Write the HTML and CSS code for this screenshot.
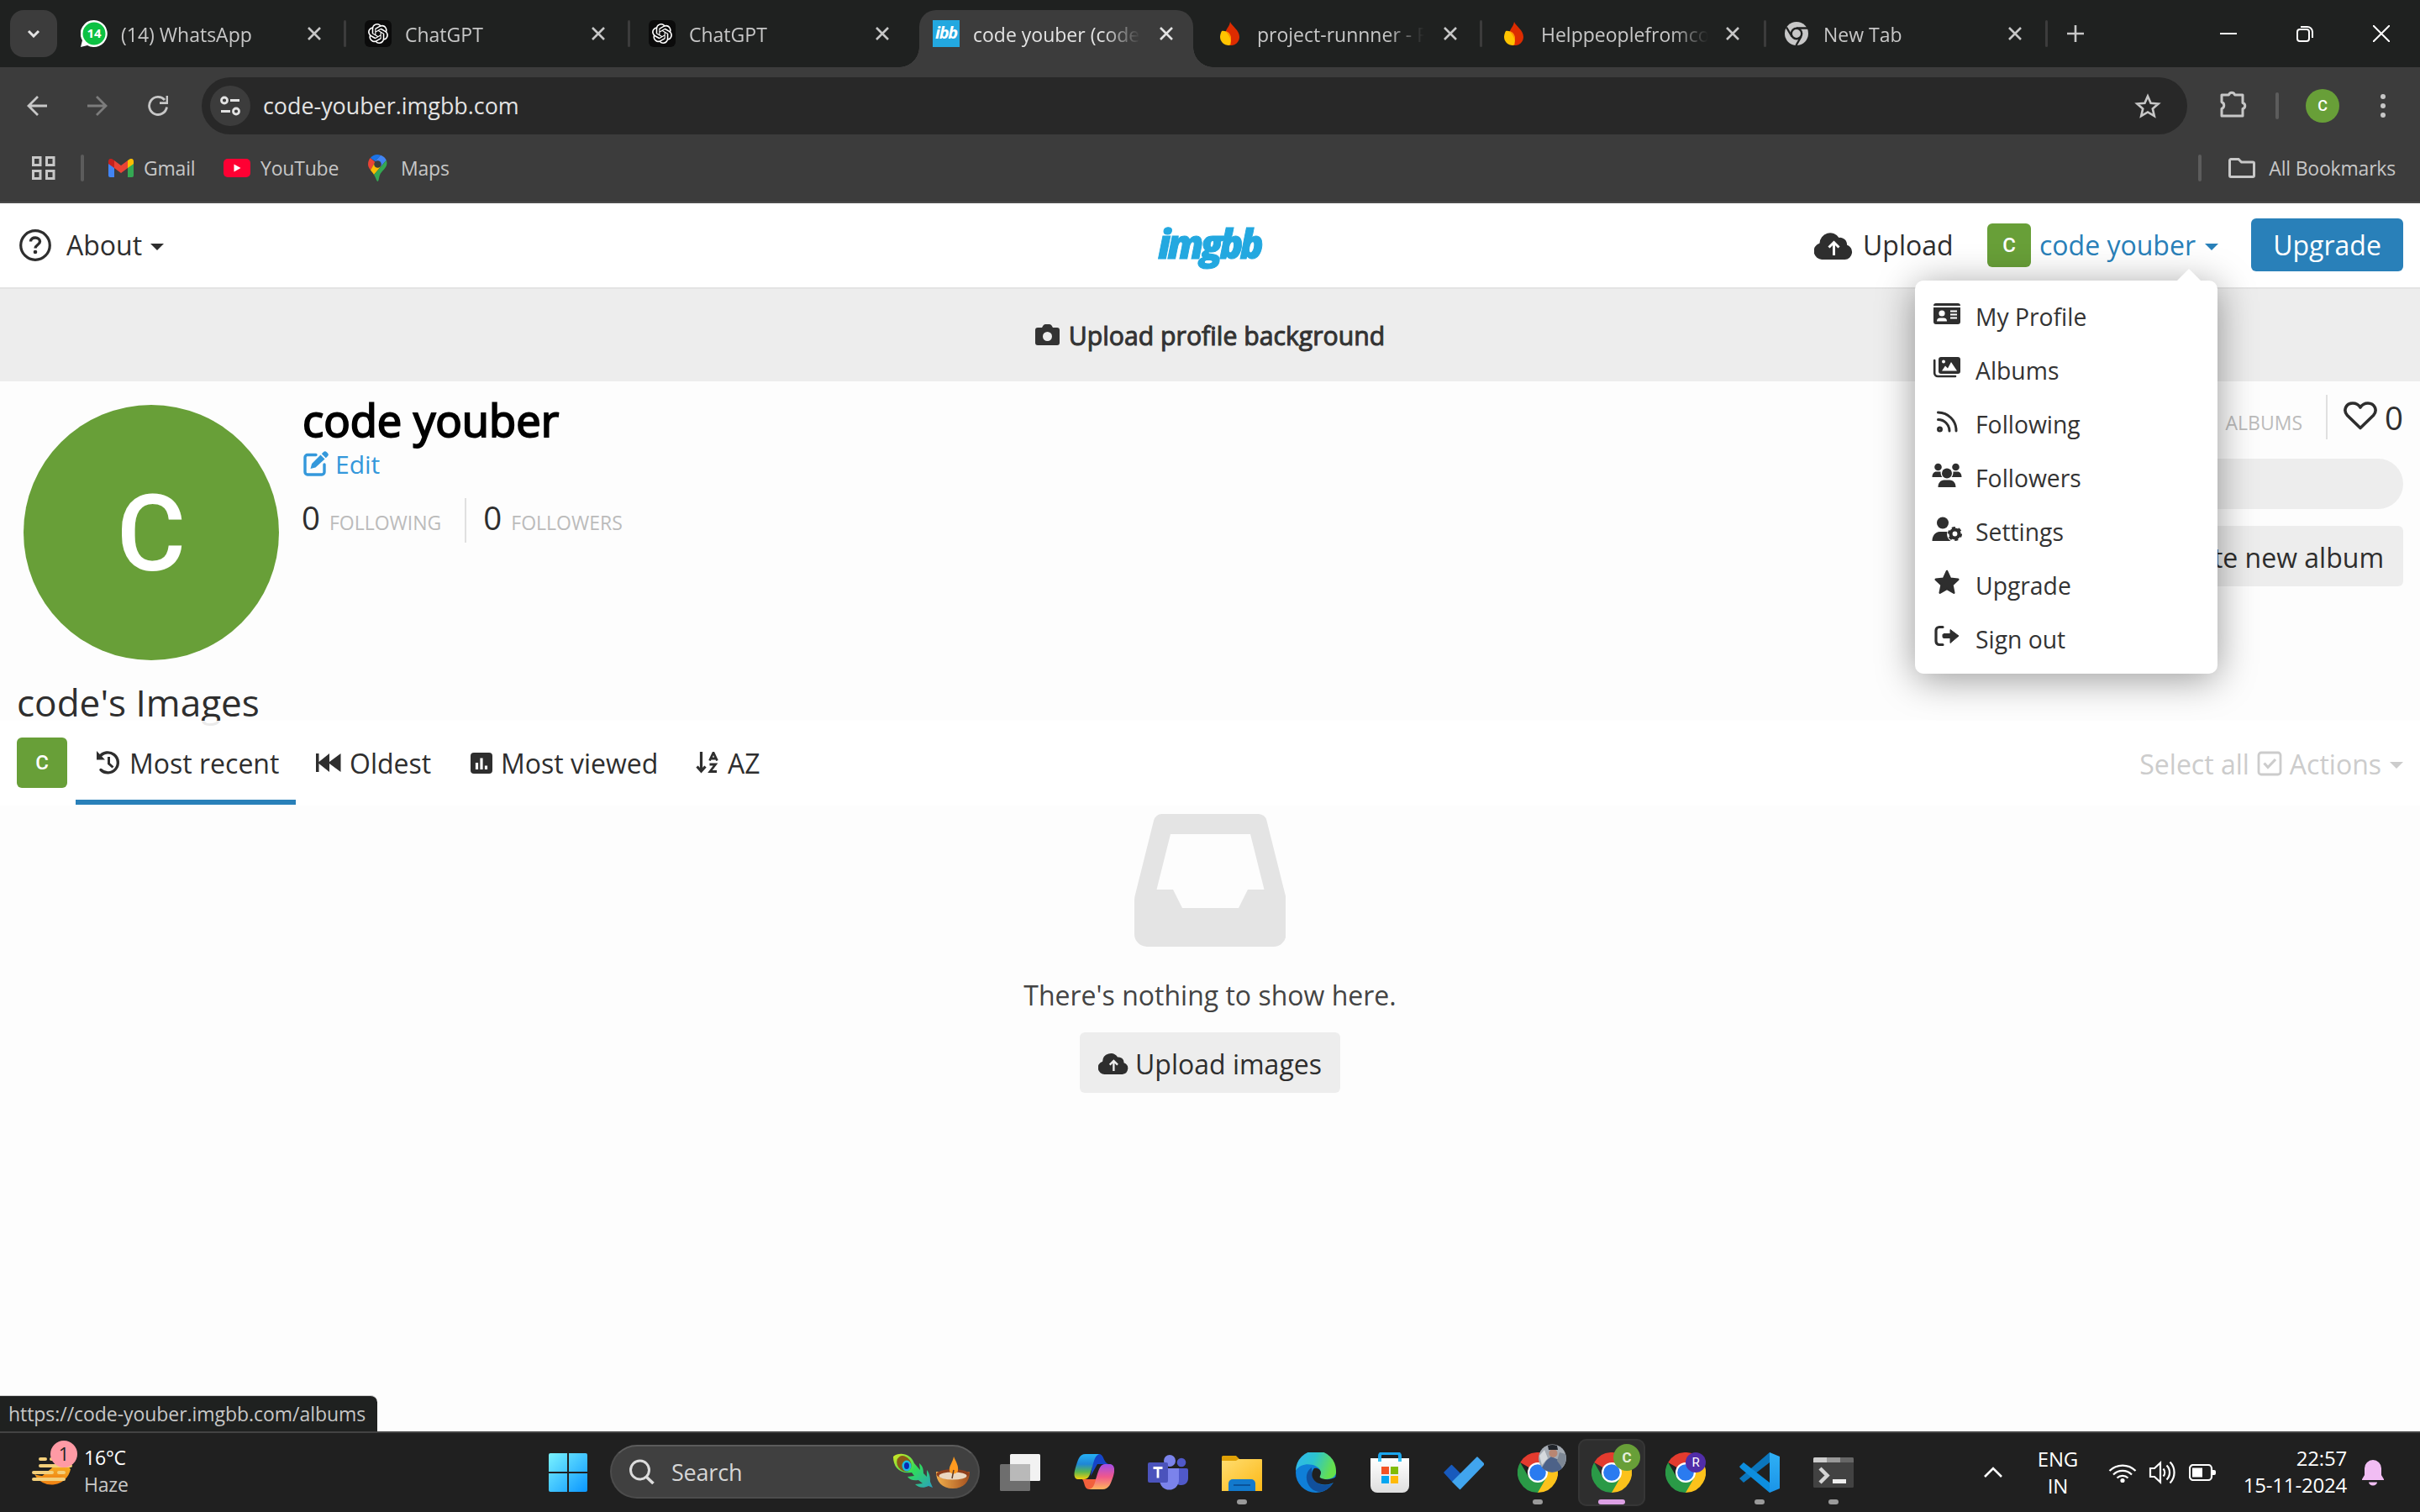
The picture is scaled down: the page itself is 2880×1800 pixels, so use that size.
FILE: index.html
```html
<!DOCTYPE html>
<html lang="en">
<head>
<meta charset="utf-8">
<title>code youber (code-youber) — ImgBB</title>
<link rel="stylesheet" href="styles.css">
</head>
<body>
<svg class="defs" width="0" height="0">
  <defs>
    <linearGradient id="gwin" gradientUnits="userSpaceOnUse" x1="0" y1="0" x2="46" y2="46"><stop offset="0" stop-color="#7af3ff"/><stop offset="1" stop-color="#0a96ff"/></linearGradient>
    <linearGradient id="gsun" x1="0" y1="0" x2="0" y2="1"><stop offset="0" stop-color="#f6c02c"/><stop offset="1" stop-color="#f08012"/></linearGradient>
    <linearGradient id="gcop1" x1="0" y1="0" x2="0" y2="1"><stop offset="0" stop-color="#25b1f5"/><stop offset=".4" stop-color="#1f86d6"/><stop offset=".7" stop-color="#58b552"/><stop offset="1" stop-color="#f4d00c"/></linearGradient>
    <linearGradient id="gcop2" x1="0" y1="0" x2="0" y2="1"><stop offset="0" stop-color="#a24de8"/><stop offset=".5" stop-color="#f0588c"/><stop offset="1" stop-color="#ffb45c"/></linearGradient>
    <linearGradient id="gfold" x1="0" y1="0" x2="1" y2="1"><stop offset="0" stop-color="#ffdd70"/><stop offset="1" stop-color="#fcb917"/></linearGradient>
    <linearGradient id="gedge" x1="0" y1="0" x2="1" y2=".3"><stop offset="0" stop-color="#2fb4f2"/><stop offset=".5" stop-color="#2cc4cf"/><stop offset="1" stop-color="#66e04c"/></linearGradient>
    <linearGradient id="gstore" x1="0" y1="0" x2="0" y2="1"><stop offset="0" stop-color="#fff"/><stop offset="1" stop-color="#dedede"/></linearGradient>
    <linearGradient id="gfeather" x1="0" y1="0" x2="1" y2="1"><stop offset="0" stop-color="#d7e620"/><stop offset=".5" stop-color="#2fdc5a"/><stop offset="1" stop-color="#2b9fc0"/></linearGradient>
    <linearGradient id="gbowl" x1="0" y1="0" x2="1" y2="0"><stop offset="0" stop-color="#f2b04c"/><stop offset="1" stop-color="#a4501f"/></linearGradient>
    <linearGradient id="gcode" x1="0" y1="0" x2="0" y2="1"><stop offset="0" stop-color="#2fb0f5"/><stop offset="1" stop-color="#1a94e8"/></linearGradient>
    <symbol id="x" viewBox="0 0 16 16"><path d="M1 1l14 14M15 1L1 15" fill="none" stroke="currentColor" stroke-width="2.6"/></symbol>
    <symbol id="gpt" viewBox="0 0 32 32"><rect width="32" height="32" rx="6" fill="#0b0b0b"/><path transform="translate(4 4)" fill="#fff" d="M22.2819 9.8211a5.9847 5.9847 0 0 0-.5157-4.9108 6.0462 6.0462 0 0 0-6.5098-2.9A6.0651 6.0651 0 0 0 4.9807 4.1818a5.9847 5.9847 0 0 0-3.9977 2.9 6.0462 6.0462 0 0 0 .7427 7.0966 5.98 5.98 0 0 0 .511 4.9107 6.051 6.051 0 0 0 6.5146 2.9001A5.9847 5.9847 0 0 0 13.2599 24a6.0557 6.0557 0 0 0 5.7718-4.2058 5.9894 5.9894 0 0 0 3.9977-2.9001 6.0557 6.0557 0 0 0-.7475-7.0729zm-9.022 12.6081a4.4755 4.4755 0 0 1-2.8764-1.0408l.1419-.0804 4.7783-2.7582a.7948.7948 0 0 0 .3927-.6813v-6.7369l2.02 1.1686a.071.071 0 0 1 .038.052v5.5826a4.504 4.504 0 0 1-4.4945 4.4944zm-9.6607-4.1254a4.4708 4.4708 0 0 1-.5346-3.0137l.142.0852 4.783 2.7582a.7712.7712 0 0 0 .7806 0l5.8428-3.3685v2.3324a.0804.0804 0 0 1-.0332.0615L9.74 19.9502a4.4992 4.4992 0 0 1-6.1408-1.6464zM2.3408 7.8956a4.485 4.485 0 0 1 2.3655-1.9728V11.6a.7664.7664 0 0 0 .3879.6765l5.8144 3.3543-2.0201 1.1685a.0757.0757 0 0 1-.071 0l-4.8303-2.7865A4.504 4.504 0 0 1 2.3408 7.872zm16.5963 3.8558L13.1038 8.364 15.1192 7.2a.0757.0757 0 0 1 .071 0l4.8303 2.7913a4.4944 4.4944 0 0 1-.6765 8.1042v-5.6772a.79.79 0 0 0-.407-.667zm2.0107-3.0231l-.142-.0852-4.7735-2.7818a.7759.7759 0 0 0-.7854 0L9.409 9.2297V6.8974a.0662.0662 0 0 1 .0284-.0615l4.8303-2.7866a4.4992 4.4992 0 0 1 6.6802 4.66zM8.3065 12.863l-2.02-1.1638a.0804.0804 0 0 1-.038-.0567V6.0742a4.4992 4.4992 0 0 1 7.3757-3.4537l-.142.0805L8.704 5.459a.7948.7948 0 0 0-.3927.6813zm1.0976-2.3654l2.602-1.4998 2.6069 1.4998v2.9994l-2.5974 1.4997-2.6067-1.4997Z"/></symbol>
    <symbol id="flame" viewBox="0 0 24 28"><path d="M12 0c2 5 11 10 11 18a10 10 0 0 1-11 10C5 28 5 20 6 14 7 8 11 6 12 0z" fill="#dd2c00"/><path d="M2 11c5-1 11 3 11 10 0 4-1 6-2 7C4 28 0 23 0 18c0-3 1-5 2-7z" fill="#ffc400"/><path d="M6 11c5 1 7 4 7 10 0 4-1 6-2 7 4 0 2-11-5-17z" fill="#ff9100"/></symbol>
    <symbol id="cloud" viewBox="0 0 46 33"><path d="M10 33A10 10 0 0 1 6.500 13.500 12.500 12.500 0 0 1 29.500 7 8 8 0 0 1 39 15.500 9 9 0 0 1 36.500 33z" fill="currentColor"/><path d="M23.500 28V13M17.500 18.500l6-6 6 6" fill="none" stroke="var(--hole,#fff)" stroke-width="3"/></symbol>
    <symbol id="caret" viewBox="0 0 16 8"><path d="M0 0h16l-8 8z" fill="currentColor"/></symbol>
    <symbol id="chrome" viewBox="0 0 48 48"><path d="M24 24L3.200 12A24 24 0 0 1 44.800 12z" fill="#e33b2e"/><path d="M24 24V12h20.800A24 24 0 0 1 24 48z" fill="#fcc21b"/><path d="M3.200 12L13.600 30 24 36l10.400-6L24 48A24 24 0 0 1 3.200 12z" fill="#2a9a47"/><circle cx="24" cy="24" r="12" fill="#fff"/><circle cx="24" cy="24" r="9.800" fill="#2a7bf0"/></symbol>
  </defs>
</svg>

<header class="browser">
  <div class="tabstrip">
    <div class="tabsearch"><svg width="16" height="10" viewBox="0 0 16 10"><path d="M2 2l6 6 6-6" fill="none" stroke="#e3e3e3" stroke-width="3"/></svg></div>
    <div class="tab tab-wa"><svg class="fav" viewBox="0 0 32 32"><path d="M16 0a16 16 0 1 1-8 30L0 32l2-8A16 16 0 0 1 16 0z" fill="#fff"/><circle cx="16" cy="16" r="13.500" fill="#0dc143"/><text x="16" y="21" class="wa-num">14</text></svg><span class="title">(14) WhatsApp</span><svg class="close"><use href="#x"/></svg></div>
    <i class="sep"></i>
    <div class="tab"><svg class="fav"><use href="#gpt"/></svg><span class="title">ChatGPT</span><svg class="close"><use href="#x"/></svg></div>
    <i class="sep"></i>
    <div class="tab"><svg class="fav"><use href="#gpt"/></svg><span class="title">ChatGPT</span><svg class="close"><use href="#x"/></svg></div>
    <i class="sep none"></i>
    <div class="tab active"><span class="fav ibb">ibb</span><span class="title">code youber (code-</span><svg class="close"><use href="#x"/></svg></div>
    <i class="sep none"></i>
    <div class="tab"><svg class="fav flame"><use href="#flame"/></svg><span class="title">project-runnner - F</span><svg class="close"><use href="#x"/></svg></div>
    <i class="sep"></i>
    <div class="tab late"><svg class="fav flame"><use href="#flame"/></svg><span class="title">Helppeoplefromco</span><svg class="close"><use href="#x"/></svg></div>
    <i class="sep"></i>
    <div class="tab last"><svg class="fav" viewBox="0 -2 32 32"><circle cx="14" cy="14" r="14" fill="#c7c7c7"/><circle cx="14" cy="14" r="6.200" fill="#c7c7c7" stroke="#1f2120" stroke-width="2.400"/><path d="M14 7.500h13M8.500 17.500L2 6.500M19.500 17.500L13.500 28" stroke="#1f2120" stroke-width="2.400"/></svg><span class="title">New Tab</span><svg class="close"><use href="#x"/></svg></div>
    <i class="sep"></i>
    <svg class="plus" viewBox="0 0 20 20"><path d="M10 0v20M0 10h20" stroke="#c7c7c7" stroke-width="2.600"/></svg>
    <div class="winctl">
      <svg width="20" height="20"><path d="M0 10h20" stroke="#fff" stroke-width="2"/></svg>
      <svg width="20" height="20" fill="none" stroke="#fff" stroke-width="2"><rect x="1" y="5" width="14" height="14" rx="3"/><path d="M5 2h8a6 6 0 0 1 6 6v7"/></svg>
      <svg width="20" height="20"><path d="M0 0l20 20M20 0L0 20" stroke="#fff" stroke-width="2"/></svg>
    </div>
  </div>
  <div class="toolbar">
    <svg class="back" viewBox="0 0 24 24"><path d="M24 12H2M13 1L2 12l11 11" fill="none" stroke="#c7c7c7" stroke-width="2.800"/></svg>
    <svg class="fwd" viewBox="0 0 24 24"><path d="M0 12h22M11 1l11 11-11 11" fill="none" stroke="#7c7c7c" stroke-width="2.800"/></svg>
    <svg class="reload" viewBox="0 0 24 24"><path d="M22.500 13.500A10.500 10.500 0 1 1 20 5M23 0v8.600h-9" fill="none" stroke="#c7c7c7" stroke-width="2.800"/></svg>
    <div class="omnibox">
      <div class="tune"><svg width="24" height="24" fill="none" stroke="#e3e3e3" stroke-width="2.800"><circle cx="5" cy="5.500" r="3.500"/><path d="M12 5.500h11M1 18.500h11"/><circle cx="19" cy="18.500" r="3.500"/></svg></div>
      <span class="url">code-youber.imgbb.com</span>
      <svg class="star" viewBox="0 0 32 30"><path d="M16 3.500l3.600 8.200 9 .8-6.800 5.900 2 8.700L16 22.500l-7.800 4.600 2-8.700-6.800-5.900 9-.8z" fill="none" stroke="#c7c7c7" stroke-width="2.600"/></svg>
    </div>
    <svg class="puzzle" viewBox="0 0 34 34"><path d="M3 6h8.500a3.600 3.600 0 0 1 7 0H28v9.500a3.600 3.600 0 0 1 0 7V31H3v-8.500a4.300 4.300 0 0 0 0-8z" fill="none" stroke="#c7c7c7" stroke-width="3" stroke-linejoin="round"/></svg>
    <i class="bar"></i>
    <span class="me">C</span>
    <svg class="dots" viewBox="0 0 6 28" fill="#c7c7c7"><circle cx="3" cy="3" r="3"/><circle cx="3" cy="14" r="3"/><circle cx="3" cy="25" r="3"/></svg>
  </div>
  <div class="bookmarks">
    <svg class="apps" width="28" height="28" fill="none" stroke="#c7c7c7" stroke-width="3"><path d="M1.500 1.500h8.500v9h-8.500zM17.500 1.500h8.500v9h-8.500zM1.500 17.500h8.500v9h-8.500zM17.500 17.500h8.500v9h-8.500z"/></svg>
    <i class="bar"></i>
    <svg class="bm-gmail" width="30" height="22" viewBox="0 0 30 22"><path d="M0 3h7v19H2a2 2 0 0 1-2-2z" fill="#4285f4"/><path d="M23 3h7v17a2 2 0 0 1-2 2h-5z" fill="#34a853"/><path d="M7 2l8 6 8-6v9l-8 6-8-6z" fill="#ea4335"/><path d="M0 3c0-3 3-4 5.500-2L7 2v9L0 6z" fill="#c5221f"/><path d="M30 3c0-3-3-4-5.500-2L23 2v9l7-5z" fill="#fbbc04"/></svg>
    <span class="w-gmail">Gmail</span>
    <svg width="32" height="22"><rect width="32" height="22" rx="5" fill="#ff0033"/><path d="M12.500 6.500v9l8-4.500z" fill="#fff"/></svg>
    <span class="w-yt">YouTube</span>
    <svg width="23" height="32" viewBox="0 0 23 32"><path d="M2.800 4L8.500 9 3 18.500C1 16 0 14 0 11.500 0 8.500 1 6 2.800 4z" fill="#ea4335"/><path d="M2.800 4A11.500 11.500 0 0 1 15 .7L8.500 8z" fill="#1a73e8"/><path d="M15 .7c3 1 5.500 3 6.800 6L15 14.500 8.500 8z" fill="#4285f4"/><path d="M3 18.500L8 9.500l7 5-8 9.500c-1-2-2.600-3.500-4-5.500z" fill="#fbbc04"/><path d="M21.800 6.700c3 9-5.300 11.300-8 18.300-1 3-1 7-2.300 7S9.600 28 7 24z" fill="#34a853"/><circle cx="11.500" cy="11.500" r="4.300" fill="#3c3c3c"/></svg>
    <span class="w-maps">Maps</span>
    <i class="bar push"></i>
    <svg class="folder" width="32" height="24" viewBox="0 0 32 24"><path d="M1.500 3a1.500 1.500 0 0 1 1.500-1.500h9l3.500 3.500H29a1.500 1.500 0 0 1 1.500 1.500V21a1.500 1.500 0 0 1-1.500 1.500H3A1.500 1.500 0 0 1 1.500 21z" fill="none" stroke="#c7c7c7" stroke-width="3"/></svg>
    <span class="w-all">All Bookmarks</span>
  </div>
</header>

<main class="site">
  <nav class="topbar">
    <svg class="q" viewBox="0 0 38 38"><circle cx="19" cy="19" r="17.300" fill="none" stroke="#2e2e2e" stroke-width="3.200"/><path d="M13.500 14.500c0-3 2.500-4.500 5.500-4.500s5.500 1.800 5.500 4.500c0 4-5.500 4-5.500 8" fill="none" stroke="#2e2e2e" stroke-width="3.400"/><circle cx="19" cy="27" r="2.300" fill="#2e2e2e"/></svg>
    <span class="about">About</span><svg class="caret"><use href="#caret"/></svg>
    <span class="logo">imgbb</span>
    <svg class="upcloud"><use href="#cloud"/></svg><span class="upload">Upload</span>
    <span class="avatar hdr-av">C</span>
    <span class="user">code youber</span><svg class="caret blue"><use href="#caret"/></svg>
    <a class="upgrade">Upgrade</a>
    <ul class="menu">
      <li><svg width="36" height="36" viewBox="0 0 36 36"><path d="M2 8a3 3 0 0 1 3-3h26a3 3 0 0 1 3 3zM2 10h32v17a3 3 0 0 1-3 3H5a3 3 0 0 1-3-3z" fill="#2e2e2e"/><g fill="#fff"><circle cx="12" cy="17" r="3.600"/><path d="M6 26.500a4 4 0 0 1 4-4h4a4 4 0 0 1 4 4zM22 13.500h8v2h-8zM22 17.500h8v2h-8zM22 21.500h8v2h-8z"/></g></svg>My Profile</li>
      <li><svg width="36" height="36" viewBox="0 0 36 36"><rect x="8" y="5" width="26" height="20" rx="3" fill="#2e2e2e"/><path d="M3.200 9v15a4 4 0 0 0 4 4H28" fill="none" stroke="#2e2e2e" stroke-width="2.600" stroke-linecap="round"/><circle cx="14" cy="10.500" r="2" fill="#fff"/><path d="M12 21.500l4-6 3 3 4-7.500 7 10.500z" fill="#fff"/></svg>Albums</li>
      <li><svg width="36" height="36" viewBox="0 0 36 36" fill="none" stroke="#2e2e2e" stroke-width="3" stroke-linecap="round"><circle cx="9.500" cy="27" r="2" /><path d="M7.500 15.500A13.500 13.500 0 0 1 21 29M7.500 7A21.500 21.500 0 0 1 29 29"/></svg>Following</li>
      <li><svg width="36" height="36" viewBox="0 0 36 36" fill="#2e2e2e"><circle cx="7.500" cy="8" r="4.300"/><circle cx="28.500" cy="8" r="4.300"/><circle cx="18" cy="15.500" r="6"/><path d="M.500 20c0-4 2-6.500 5-6.500h5c0 3 .5 5 2 6.500zM35.500 20c0-4-2-6.500-5-6.500h-5c0 3-.5 5-2 6.500zM7.500 32c0-5 3-8.500 7-8.500h7c4 0 7 3.500 7 8.500z"/></svg>Followers</li>
      <li><svg width="36" height="36" viewBox="0 0 36 36" fill="#2e2e2e"><circle cx="13" cy="10.500" r="7"/><path d="M.500 32c0-6 3.500-11 9-11h9c-1 4 0 8 4 11z"/><circle cx="27.500" cy="23.500" r="5" fill="none" stroke="#2e2e2e" stroke-width="4.200"/><circle cx="27.500" cy="23.500" r="7.300" fill="none" stroke="#2e2e2e" stroke-width="2.600" stroke-dasharray="4 3.640"/></svg>Settings</li>
      <li><svg width="36" height="36" viewBox="0 0 36 36" fill="#2e2e2e"><path d="M18 4l4 8.700 9.300 1.100-6.900 6.500 1.900 9.400L18 25l-8.300 4.700 1.900-9.400-6.900-6.500 9.300-1.100z" stroke="#2e2e2e" stroke-width="2.500" stroke-linejoin="round"/></svg>Upgrade</li>
      <li><svg width="36" height="36" viewBox="0 0 36 36"><path d="M13 6.500H9a4 4 0 0 0-4 4v13a4 4 0 0 0 4 4h4" fill="none" stroke="#2e2e2e" stroke-width="3.200" stroke-linecap="round"/><path d="M14 14.500h8v-5L32 17l-10 8.500v-6h-8a1.500 1.500 0 0 1-1-1.500v-2.500z" fill="#2e2e2e" stroke="#2e2e2e" stroke-linejoin="round"/></svg>Sign out</li>
    </ul>
  </nav>
  <div class="band"><svg width="29" height="25" viewBox="0 0 29 25"><path d="M3 4h5l1.500-2.500A3 3 0 0 1 12 0h5a3 3 0 0 1 2.500 1.500L21 4h5a3 3 0 0 1 3 3v15a3 3 0 0 1-3 3H3a3 3 0 0 1-3-3V7a3 3 0 0 1 3-3z" fill="#333"/><circle cx="14.500" cy="14.500" r="5.500" fill="#ededed"/></svg><span>Upload profile background</span></div>

  <section class="profile">
    <span class="avatar big">C</span>
    <div class="who">
      <h1>code youber</h1>
      <div class="edit"><svg width="30" height="30" viewBox="0 0 30 30"><path d="M15 4.500H5a3 3 0 0 0-3 3V25a3 3 0 0 0 3 3h17a3 3 0 0 0 3-3V16" fill="none" stroke="#3498db" stroke-width="3.400" stroke-linecap="round"/><path d="M8.500 21l1.600-6L20.500 4.500l5 5L14.500 19.500zM21.800 3.200l2-2a2.800 2.800 0 0 1 4 0l1 1a2.800 2.800 0 0 1 0 4l-2 2z" fill="#3498db"/></svg><span>Edit</span></div>
      <div class="stats"><b>0</b><span class="s1">FOLLOWING</span><i></i><b>0</b><span>FOLLOWERS</span></div>
    </div>
    <div class="side">
      <div class="stats right"><b>0</b><span>ALBUMS</span><i></i><svg width="40" height="34" viewBox="0 0 40 34"><path d="M20 31.500L4.500 16.500C-1 10.500 3 2 11 2c4 0 7 2 9 5 2-3 5-5 9-5 8 0 12 8.500 6.500 14.500z" fill="none" stroke="#2e2e2e" stroke-width="3.600" stroke-linejoin="round"/></svg><b class="likes">0</b></div>
      <div class="pill"></div>
      <a class="btn album">Create new album</a>
    </div>
  </section>

  <h2>code's Images</h2>
  <div class="tabsbar">
    <span class="avatar small">C</span>
    <div class="ft on"><svg width="30" height="30" viewBox="0 0 30 30"><path d="M4.500 8A12 12 0 1 1 6 23.500" fill="none" stroke="#2e2e2e" stroke-width="3.400" stroke-linecap="round"/><path d="M1 1v10.500h10z" fill="#2e2e2e"/><path d="M15.500 8v8l5 4.500" fill="none" stroke="#2e2e2e" stroke-width="3"/></svg>Most recent</div>
    <div class="ft f2"><svg width="30" height="22" viewBox="0 0 30 22"><path d="M0 0h3.500v10L16 0v10L29.500 0v22L16 12v10L3.500 12v10H0z" fill="#2e2e2e"/></svg>Oldest</div>
    <div class="ft f3"><svg width="26" height="25" viewBox="0 0 26 25"><rect width="26" height="25" rx="4" fill="#2e2e2e"/><path d="M7.500 12v8M13 6.500V20M18.500 15.500V20" stroke="#fdfdfd" stroke-width="3.200"/></svg>Most viewed</div>
    <div class="ft f4"><svg width="28" height="26" viewBox="0 0 28 26" fill="none" stroke="#2e2e2e" stroke-width="3.200"><path d="M6.500 0v22M1.500 17.500l5 5.500 5-5.500"/><path d="M16.500 10.500L21 1l4.500 9.500M17.500 8h7M16.500 15h7l-6.500 8.500h8" stroke-width="2.800"/></svg>AZ</div>
    <div class="sel"><span>Select all</span><svg width="30" height="30" viewBox="0 0 30 30" fill="none" stroke="#ccc" stroke-width="2.800"><rect x="2" y="2" width="26" height="26" rx="3"/><path d="M8.500 14.500l4.500 5L22 10" stroke-width="3.200"/></svg><span>Actions</span><svg class="caret"><use href="#caret"/></svg></div>
  </div>

  <section class="empty">
    <svg width="180" height="158" viewBox="0 0 180 158"><path fill-rule="evenodd" fill="#e4e4e4" d="M33 0H148a10 10 0 0 1 9.500 8L179 94q1.500 5 1.500 9v40a15 15 0 0 1-15 15H15a15 15 0 0 1-15-15v-40q0-4 1.500-9L23 8a10 10 0 0 1 10-8zM43 24L26.500 90H46l11 22h67l11-22h19.500L138 24z"/></svg>
    <p>There's nothing to show here.</p>
    <a class="btn upbtn"><svg width="36" height="26"><use href="#cloud"/></svg>Upload images</a>
  </section>
  <div class="status">https://code-youber.imgbb.com/albums</div>
</main>

<footer class="taskbar">
  <div class="weather">
    <svg width="64" height="60" viewBox="0 0 64 60"><path d="M13 40A23 23 0 0 0 56 34L48 24c-6 14-18 22-35 16z" fill="url(#gsun)"/><path d="M20 44a22 22 0 0 0 34-20H44z" fill="url(#gsun)"/><path d="M20 22h6M33 22h6M20 30h36M12 38h22M42 38h6M12 46h36" stroke="#f3cf7a" stroke-width="4" stroke-linecap="round"/><circle cx="48" cy="16" r="16" fill="#ff9aa5"/><text x="48" y="24" class="badge-num">1</text></svg>
    <div><span class="deg">16°C</span><span class="haze">Haze</span></div>
  </div>
  <svg class="winlogo" width="46" height="46"><path d="M2 0h20v22H0V2a2 2 0 0 1 2-2zM24 0h20a2 2 0 0 1 2 2v20H24zM0 24h22v22H2a2 2 0 0 1-2-2zM24 24h22v20a2 2 0 0 1-2 2H24z" fill="url(#gwin)"/></svg>
  <div class="search">
    <svg width="30" height="30" fill="none" stroke="#dcdcdc" stroke-width="3"><circle cx="12.500" cy="13" r="11"/><path d="M20 21l8.500 8" stroke-width="3.600"/></svg>
    <span>Search</span>
    <svg width="92" height="44" viewBox="0 0 92 44"><path d="M1 4C8-2 22 0 26 12l7 8-1-8c4 3 5 7 5 12l4 4v-8c4 5 4 10 4 14l3 7-5-2c-6 3-12 2-16-2l9-1-5-4c-6 1-10 0-13-4l8-1-3-4C8 25 1 16 1 4z" fill="url(#gfeather)"/><ellipse cx="14" cy="12.500" rx="8" ry="10" transform="rotate(-35 14 12.500)" fill="#8a5a17"/><ellipse cx="17" cy="15" rx="5.500" ry="6.500" fill="#18bde0"/><ellipse cx="17" cy="15" rx="3" ry="4" fill="#0b2bb0"/><path d="M52 22h40c0 12-7 20-20 20S52 34 52 22z" fill="url(#gbowl)"/><ellipse cx="72" cy="25" rx="19.500" ry="6" fill="#8f3f1b"/><ellipse cx="72" cy="27" rx="16.500" ry="4.500" fill="#ead7c0"/><path d="M73 4c3 7 6 11 5 17-1 4-9 5-10 0-1-6 4-10 5-17z" fill="#ff9a1f"/><path d="M73 20l-2 10" stroke="#5b3a28" stroke-width="1.500"/></svg>
  </div>
  <div class="apps-row">
    <div class="app tv"><svg width="48" height="48"><rect x="12" y="2" width="36" height="32" rx="1.500" fill="#f2f2f2"/><rect x="0" y="14" width="36" height="32" rx="1.500" fill="#6e6e6e"/><path d="M12 14h24v20H12z" fill="#b9b9b9"/></svg></div>
    <div class="app"><svg width="48" height="48"><path d="M24 2h6c6 0 5 11 12 12H28l-8 14z" fill="#1545c8"/><path d="M14 2h16c-5 2-6 8-8 15-3 10-4 15-10 15H6c-7 0-6-7-4-14 3-9 4-16 12-16z" fill="url(#gcop1)"/><path d="M24 44h-6c-6 0-5-9-8-12h16l6-8z" fill="#f2603c"/><path d="M34 44H18c6-1 7-8 9-15 3-10 5-15 10-15h5c7 0 7 7 5 14-3 9-5 16-13 16z" fill="url(#gcop2)"/></svg></div>
    <div class="app"><svg width="48" height="48"><circle cx="26" cy="10" r="7" fill="#7b83eb"/><circle cx="40" cy="12" r="5.300" fill="#5059c9"/><path d="M33 19h13a2 2 0 0 1 2 2v10c0 5-4 8-8 8s-7-2-7-6z" fill="#5059c9"/><path d="M14 19h23v14a11.500 11.500 0 0 1-23 0z" fill="#7b83eb"/><rect y="12" width="24" height="24" rx="2" fill="#4b53bc"/><path d="M6.500 18.500h11M12 18.500v12" stroke="#fff" stroke-width="2.800"/></svg></div>
    <div class="app run"><svg width="48" height="48"><path d="M1.500 4H17l4 4v6H0V5.500A1.500 1.500 0 0 1 1.500 4z" fill="#e0a106"/><path d="M0 10h17l3-2h27a1 1 0 0 1 1 1v37H0z" fill="url(#gfold)"/><path d="M8 46V37a5 5 0 0 1 5-5h22a5 5 0 0 1 5 5v9z" fill="#1279cc"/><path d="M14 39h20" stroke="#0a5299" stroke-width="2"/></svg></div>
    <div class="app"><svg width="48" height="48"><circle cx="24" cy="24" r="24" fill="#0f7fd8"/><path d="M0 22A24 24 0 0 1 48 22c1 7-6 10-12 10-5 0-9-1-8-4 2-2 2-4 1-7-3-7-22-11-29 1z" fill="url(#gedge)"/><path d="M19 18c-12 8-5 28 9 29 6 0 12-4 16-10-6 3-15 3-20-2s-5-12-5-17z" fill="#11509c"/><path d="M22 19c-4 4-4 12 3 17 7 4 17 3 23-2V29c-5 4-15 4-19 1-1-1 1-3 1-6s-4-6-8-5z" fill="#202020"/></svg></div>
    <div class="app"><svg width="48" height="48"><path d="M12 11V4a3 3 0 0 1 3-3h18a3 3 0 0 1 3 3v7" fill="none" stroke="#1aa6ee" stroke-width="4"/><path d="M1 7h46v33a8 8 0 0 1-8 8H9a8 8 0 0 1-8-8z" fill="url(#gstore)"/><path d="M12 11V7M36 11V7" stroke="#35c1f1" stroke-width="4"/><path d="M14 17h9v9h-9z" fill="#f35325"/><path d="M25 17h9v9h-9z" fill="#81bc06"/><path d="M14 28h9v9h-9z" fill="#05a6f0"/><path d="M25 28h9v9h-9z" fill="#ffba08"/></svg></div>
    <div class="app"><svg width="48" height="48"><path d="M1 24l8.500-8.500L20 26 11 35z" fill="#185abd" stroke="#185abd" stroke-width="1.500" stroke-linejoin="round"/><path d="M11 35L40 6l8 8-28.500 29.500z" fill="#41a5ee" stroke="#41a5ee" stroke-width="1.500" stroke-linejoin="round"/></svg></div>
    <div class="app run"><svg width="58" height="58" viewBox="0 -10 58 58"><use href="#chrome" width="48" height="48"/><circle cx="41.500" cy="7" r="16.500" fill="#a5abb3"/><path d="M29 18l5-8 6-5 9 4 4 10a16.500 16.500 0 0 1-24-1z" fill="#4d6288"/><path d="M50 0l7 2a16.500 16.500 0 0 1-4 16l-6-8z" fill="#7d8794"/><circle cx="42.500" cy="1" r="5" fill="#b98672"/><path d="M36-8a16.500 16.500 0 0 1 11 0l1 5H37z" fill="#20242a"/><path d="M26 4l6-7 4 10-7 8z" fill="#d5d9dd"/></svg></div>
    <div class="app run cur"><svg width="58" height="58" viewBox="0 -10 58 58"><use href="#chrome" width="48" height="48"/><circle cx="42" cy="6" r="16" fill="#689f38"/><text x="42" y="12" class="bc">C</text></svg></div>
    <div class="app"><svg width="48" height="48"><use href="#chrome" width="48" height="48"/><circle cx="36" cy="12" r="12" fill="#512da8"/><text x="36" y="17" class="br">R</text></svg></div>
    <div class="app run"><svg width="48" height="48"><path d="M0 31l5 5L36 12V0z" fill="#0b76bd"/><path d="M0 17l5-5 31 24v12L1.500 19z" fill="#0d8ede"/><path d="M36 0l12 5v38l-12 5z" fill="url(#gcode)"/></svg></div>
    <div class="app run"><svg width="48" height="48"><rect y="6" width="48" height="36" rx="1.500" fill="#424242"/><path d="M0 12V7.500A1.500 1.500 0 0 1 1.500 6H16v6z" fill="#ccc"/><path d="M16 6h16v6H16z" fill="#999"/><path d="M32 6h14.500A1.500 1.500 0 0 1 48 7.500V12H32z" fill="#666"/><path d="M8 19l8.500 8.500L8 36" fill="none" stroke="#d5d5d5" stroke-width="4.500"/><path d="M23 34.500h16" stroke="#eee" stroke-width="5"/></svg></div>
  </div>
  <div class="tray">
    <svg class="chev" width="22" height="13"><path d="M1 12L11 2l10 10" fill="none" stroke="#fff" stroke-width="2.600"/></svg>
    <div class="lang">ENG<br>IN</div>
    <svg class="wifi" width="34" height="26" viewBox="0 0 34 26" fill="none" stroke="#fff" stroke-width="2.200"><path d="M1.500 11a22 22 0 0 1 31 0M6 15.500a15.500 15.500 0 0 1 22 0M10.500 19.500a9.300 9.300 0 0 1 13 0"/><circle cx="17" cy="22.500" r="2.600" fill="#fff" stroke="none"/></svg>
    <svg class="spk" width="34" height="28" viewBox="0 0 34 28" fill="none" stroke="#fff" stroke-width="2.200"><path d="M2 9h5l7-6.500v23L7 19H2zM17.500 9.500a7 7 0 0 1 0 9M21.500 5.500a12 12 0 0 1 0 17M25.500 1.500a18 18 0 0 1 0 25"/></svg>
    <svg class="bat" width="32" height="20"><rect x="1" y="1" width="26" height="18" rx="4" fill="none" stroke="#fff" stroke-width="2.200"/><path d="M4 4.500h12v11H4z" fill="#fff"/><path d="M27 7h3a2 2 0 0 1 2 2v2a2 2 0 0 1-2 2h-3z" fill="#fff"/></svg>
    <div class="clock">22:57<br>15-11-2024</div>
    <svg class="bell" width="26" height="31" viewBox="0 0 26 31" fill="#f1bdf3"><path d="M13 0a10 10 0 0 1 10 10v8l3 5v1H0v-1l3-5v-8A10 10 0 0 1 13 0zM8 26.500h10a5 4 0 0 1-10 0z"/></svg>
  </div>
</footer>
</body>
</html>
```
FILE: styles.css
```css
* { box-sizing: border-box; }
body { margin: 0; width: 2880px; height: 1800px; overflow: hidden; font-family: "Open Sans", "Noto Sans", sans-serif; color: #2e2e2e; background: #fdfdfd; display: flex; flex-direction: column; }
svg { display: block; flex: none; }
.defs { position: absolute; }
span, div, li, a { white-space: nowrap; }

/* browser chrome */
.browser { flex: none; height: 242px; background: #3c3c3c; border-bottom: 2px solid #4a4a4a; font-size: 23px; letter-spacing: -.2px; color: #c7c7c7; }
.tabstrip { height: 80px; background: #1f2120; display: flex; align-items: center; padding-left: 12px; }
.tabsearch { flex: none; width: 56px; height: 56px; border-radius: 16px; background: #3c3c3c; display: flex; align-items: center; justify-content: center; }
.tab { flex: none; width: 322px; height: 56px; display: flex; align-items: center; padding: 0 20px 0 16px; margin: 0 7px 0 6px; }
.tab-wa { margin-left: 12px; }
.tab.late { padding-right: 22px; }
.tab.last { width: 319px; padding-right: 21px; }
.tab .fav { width: 32px; height: 32px; margin-right: 16px; flex: none; }
.tab.last .fav { margin-right: 14px; }
.tab .flame { height: 28px; width: 24px; margin: 0 20px 0 4px; }
.title { width: 202px; overflow: hidden; line-height: 36px; padding-top: 2px; letter-spacing: 0; -webkit-mask-image: linear-gradient(90deg, #000 155px, transparent 199px); mask-image: linear-gradient(90deg, #000 155px, transparent 199px); }
.close { width: 16px; height: 16px; margin-left: auto; }
.tabstrip .sep { flex: none; width: 3px; height: 32px; background: #3c3c3c; border-radius: 2px; }
.tabstrip .none { background: transparent; }
.tab.active { position: relative; height: 68px; align-self: flex-end; background: #3c3c3c; border-radius: 20px 20px 0 0; color: #e3e3e3; padding-right: 24px; padding-bottom: 12px; width: 326px; margin: 0 3px 0 6px; }
.tab.active::before, .tab.active::after { content: ""; position: absolute; bottom: 0; width: 24px; height: 24px; }
.tab.active::before { left: -24px; background: radial-gradient(circle at 0 0, transparent 23.500px, #3c3c3c 24px); }
.tab.active::after { right: -24px; background: radial-gradient(circle at 100% 0, transparent 23.500px, #3c3c3c 24px); }
.ibb { background: #23a8e0; color: #fff; font: italic 700 20px/30px "Open Sans", sans-serif; letter-spacing: -1.300px; text-align: center; }
.wa-num { font: 700 15px "Open Sans", sans-serif; fill: #fff; text-anchor: middle; letter-spacing: 0; }
.plus { width: 20px; height: 20px; margin-left: 23px; }
.winctl { margin-left: auto; display: flex; gap: 71px; padding-right: 36px; }
.toolbar { height: 92px; padding: 0 31px 0 32px; display: flex; align-items: center; margin-bottom: -4px; }
.back, .fwd, .reload { width: 24px; height: 24px; }
.fwd { margin-left: 48px; }
.reload { margin-left: 48px; }
.omnibox { flex: none; width: 2363px; height: 68px; border-radius: 34px; margin-left: 40px; background: #282828; display: flex; align-items: center; padding: 0 31px 0 10px; }
.tune { width: 48px; height: 48px; border-radius: 50%; background: #3c3c3c; display: flex; align-items: center; justify-content: center; }
.url { margin-left: 15px; font-size: 26.850px; color: #e3e3e3; letter-spacing: 0; margin-top: -1px; }
.star { width: 32px; height: 30px; margin-left: auto; }
.puzzle { width: 34px; height: 34px; margin: -5px 0 0 38px; }
.bar { flex: none; width: 4px; height: 32px; border-radius: 2px; background: #5c5c5c; }
.toolbar .bar { margin-left: 33px; }
.me { width: 40px; height: 40px; border-radius: 50%; background: #689f38; color: #fff; margin-left: 32px; font: 500 18px/40px Roboto, sans-serif; text-align: center; }
.dots { width: 6px; height: 28px; margin-left: auto; margin-right: 10px; }
.bookmarks { height: 64px; display: flex; align-items: center; padding: 0 29px 0 38px; }
.bookmarks span { margin-top: -1px; }
.bookmarks .apps { margin-right: 30px; }
.bm-gmail { margin-left: 29px; }
.w-gmail { width: 107px; padding-left: 12px; }
.w-yt { width: 140px; padding-left: 12px; }
.w-maps { padding-left: 16px; }
.push { margin-left: auto; margin-right: 32px; }
.folder { margin-right: 16px; }

/* site header */
.site { flex: 1; display: flex; flex-direction: column; font-size: 32px; position: relative; }
.topbar { position: relative; flex: none; height: 102px; background: #fff; border-bottom: 2px solid #e3e3e3; display: flex; align-items: center; padding-left: 23px; }
.topbar > span, .upgrade { margin-top: -1px; }
.q { width: 38px; height: 38px; }
.about { width: 100px; padding-left: 18px; }
.topbar .caret { width: 16px; height: 8px; margin: 3px 0 0 18px; }
.logo { width: 130px; margin-left: 1183px; padding-bottom: 3px; font: italic 800 48px/60px "Open Sans", sans-serif; letter-spacing: -4px; color: #23a8e0; -webkit-text-stroke: 1px #23a8e0; transform-origin: 0 50%; transform: scaleX(.97); }
.upcloud { width: 46px; height: 33px; margin-left: 651px; }
.upload { width: 160px; padding-left: 12px; }
.avatar { display: block; flex: none; background: #689f38; color: #fff; font-family: Roboto, sans-serif; font-weight: 500; text-align: center; border-radius: 6px; }
.hdr-av { width: 52px; height: 52px; font-size: 24px; line-height: 52px; }
.user { width: 196px; padding-left: 10px; color: #2980b9; }
.topbar .blue { color: #2980b9; margin-left: 11px; }
.upgrade { width: 181px; height: 63px; border-radius: 6px; background: #2980b9; color: #fff; line-height: 63px; text-align: center; margin-left: 39px; }
.menu { position: absolute; z-index: 3; left: 2279px; top: 92px; width: 360px; height: 468px; margin: 0; padding: 11px 0 7px; list-style: none; background: #fff; border-radius: 10px; box-shadow: 0 6px 46px rgba(0,0,0,.4); font-size: 28.300px; }
.menu::before { content: ""; position: absolute; right: 20px; top: -14px; border: 14px solid transparent; border-top: 0; border-bottom-color: #fff; }
.menu li { height: 64px; display: flex; align-items: center; gap: 16px; padding-left: 20px; color: #333; }
.menu svg { margin-top: -6px; }

.band { flex: none; height: 110px; background: #ededed; display: flex; align-items: center; justify-content: center; gap: 11px; color: #333; font-size: 30.200px; -webkit-text-stroke: 1px #333; }
.band svg { margin-top: -2px; }

/* profile */
.profile { height: 348px; flex: none; display: flex; padding-left: 28px; }
.big { width: 304px; height: 304px; border-radius: 50%; margin-top: 28px; font-size: 126px; line-height: 309px; }
.who { margin-left: 29px; }
h1 { margin: 8px 0 0 -1px; font-size: 52.500px; line-height: 76px; font-weight: 400; color: #000; -webkit-text-stroke: 2px #000; height: 74px; }
.edit { display: flex; align-items: center; gap: 8px; height: 32px; color: #3498db; font-size: 30px; }
.stats { display: flex; align-items: baseline; margin-top: 16px; height: 54px; }
.who .stats { margin-top: 21px; margin-left: -2px; }
.stats b { font-weight: 400; font-size: 38.400px; line-height: 54px; letter-spacing: 0; }
.stats span { font-size: 23px; color: #bbb; margin-left: 11px; }
.stats i { align-self: flex-start; width: 2px; height: 53px; background: #e0e0e0; margin: 4px 20px 0 28px; }
.side { margin-left: auto; padding-right: 20px; display: flex; flex-direction: column; align-items: flex-end; }
.right svg { align-self: flex-start; margin: 8px 9px 0 -1px; }
.right i { margin-top: 0; }
.pill { width: 400px; height: 60px; border-radius: 30px; background: #ededed; margin-top: 22px; }
.btn { display: flex; align-items: center; background: #ededed; border-radius: 6px; height: 72px; padding: 2px 24px 0; color: #2e2e2e; }
.album { margin-top: 20px; padding-right: 23px; }
h2 { margin: 0; padding-left: 20px; font-size: 44.100px; line-height: 69px; font-weight: 400; height: 56px; flex: none; }

/* listing */
.tabsbar { position: relative; z-index: 1; flex: none; height: 101px; background: rgba(255,255,255,.9); display: flex; padding: 0 20px; }
.small { width: 60px; height: 60px; margin-top: 20px; font-size: 24px; line-height: 60px; }
.ft { height: 100px; display: flex; align-items: center; gap: 10px; padding: 0 0 0 24px; }
.ft.on { width: 262px; margin-left: 10px; border-bottom: 6px solid #2980b9; padding-top: 6px; }
.f2 { width: 184px; }
.f3 { width: 268px; }
.sel { margin-left: auto; height: 100px; display: flex; align-items: center; gap: 9px; color: #ccc; padding-top: 2px; }
.sel .caret { width: 16px; height: 8px; margin: 3px 0 0 1px; }
.empty { display: flex; flex-direction: column; align-items: center; padding-top: 10px; }
.empty p { margin: 36px 0 0; line-height: 44px; color: #444; }
.upbtn { margin-top: 22px; gap: 8px; --hole: #ededed; padding: 2px 22px 0; }
.status { position: absolute; left: 0; bottom: 0; width: 449px; height: 43px; background: #1f2120; border-top: 1px solid #ccc; border-top-right-radius: 8px; color: #c7c7c7; font-size: 23px; line-height: 43px; padding-left: 10px; letter-spacing: -.05px; }

/* taskbar */
.taskbar { position: relative; flex: none; height: 96px; background: #202020; border-top: 2px solid #434343; display: flex; align-items: center; font-size: 23px; color: #fff; letter-spacing: -.2px; }
.weather { width: 653px; padding-left: 28px; display: flex; align-items: flex-start; height: 84px; gap: 8px; }
.weather svg { margin-top: 4px; }
.weather div { display: flex; flex-direction: column; line-height: 32px; padding-top: 8px; }
.haze { color: #c8c8c8; }
.badge-num { font: 22px "Open Sans", sans-serif; text-anchor: middle; fill: #222; }
.search { width: 440px; height: 64px; margin: -2px 0 0 27px; border-radius: 32px; background: #404040; border: 2px solid #4c4c4c; border-top-color: #5c5c5c; display: flex; align-items: center; padding: 0 10px 0 21px; font-size: 27px; color: #d6d6d6; }
.search span { margin: 0 auto 0 20px; }
.apps-row { display: flex; gap: 8px; margin-left: 8px; height: 80px; }
.app { position: relative; width: 80px; height: 80px; border-radius: 10px; display: flex; align-items: flex-end; padding: 0 16px 16px; }
.run::after { content: ""; position: absolute; left: 34px; bottom: 2px; width: 12px; height: 6px; border-radius: 3px; background: #9a9a9a; }
.cur { background: #2e2e2e; box-shadow: inset 0 0 0 2px #363636; }
.cur::after { left: 24px; width: 32px; background: #dca0e4; }
.bc { font: 700 17px Roboto, sans-serif; fill: #e6efdc; text-anchor: middle; }
.br { font: 15px Roboto, sans-serif; fill: #fff; text-anchor: middle; }
.tray { margin-left: auto; display: flex; align-items: center; padding-right: 43px; line-height: 32px; height: 92px; font-size: 24px; }
.chev { margin-top: -1px; }
.lang { width: 50px; margin: 0 35px 0 41px; text-align: center; }
.wifi { margin-right: 14px; }
.spk { margin-right: 14px; }
.clock { width: 150px; margin-left: 6px; text-align: right; padding-bottom: 2px; }
.bell { margin-left: 18px; }
```
